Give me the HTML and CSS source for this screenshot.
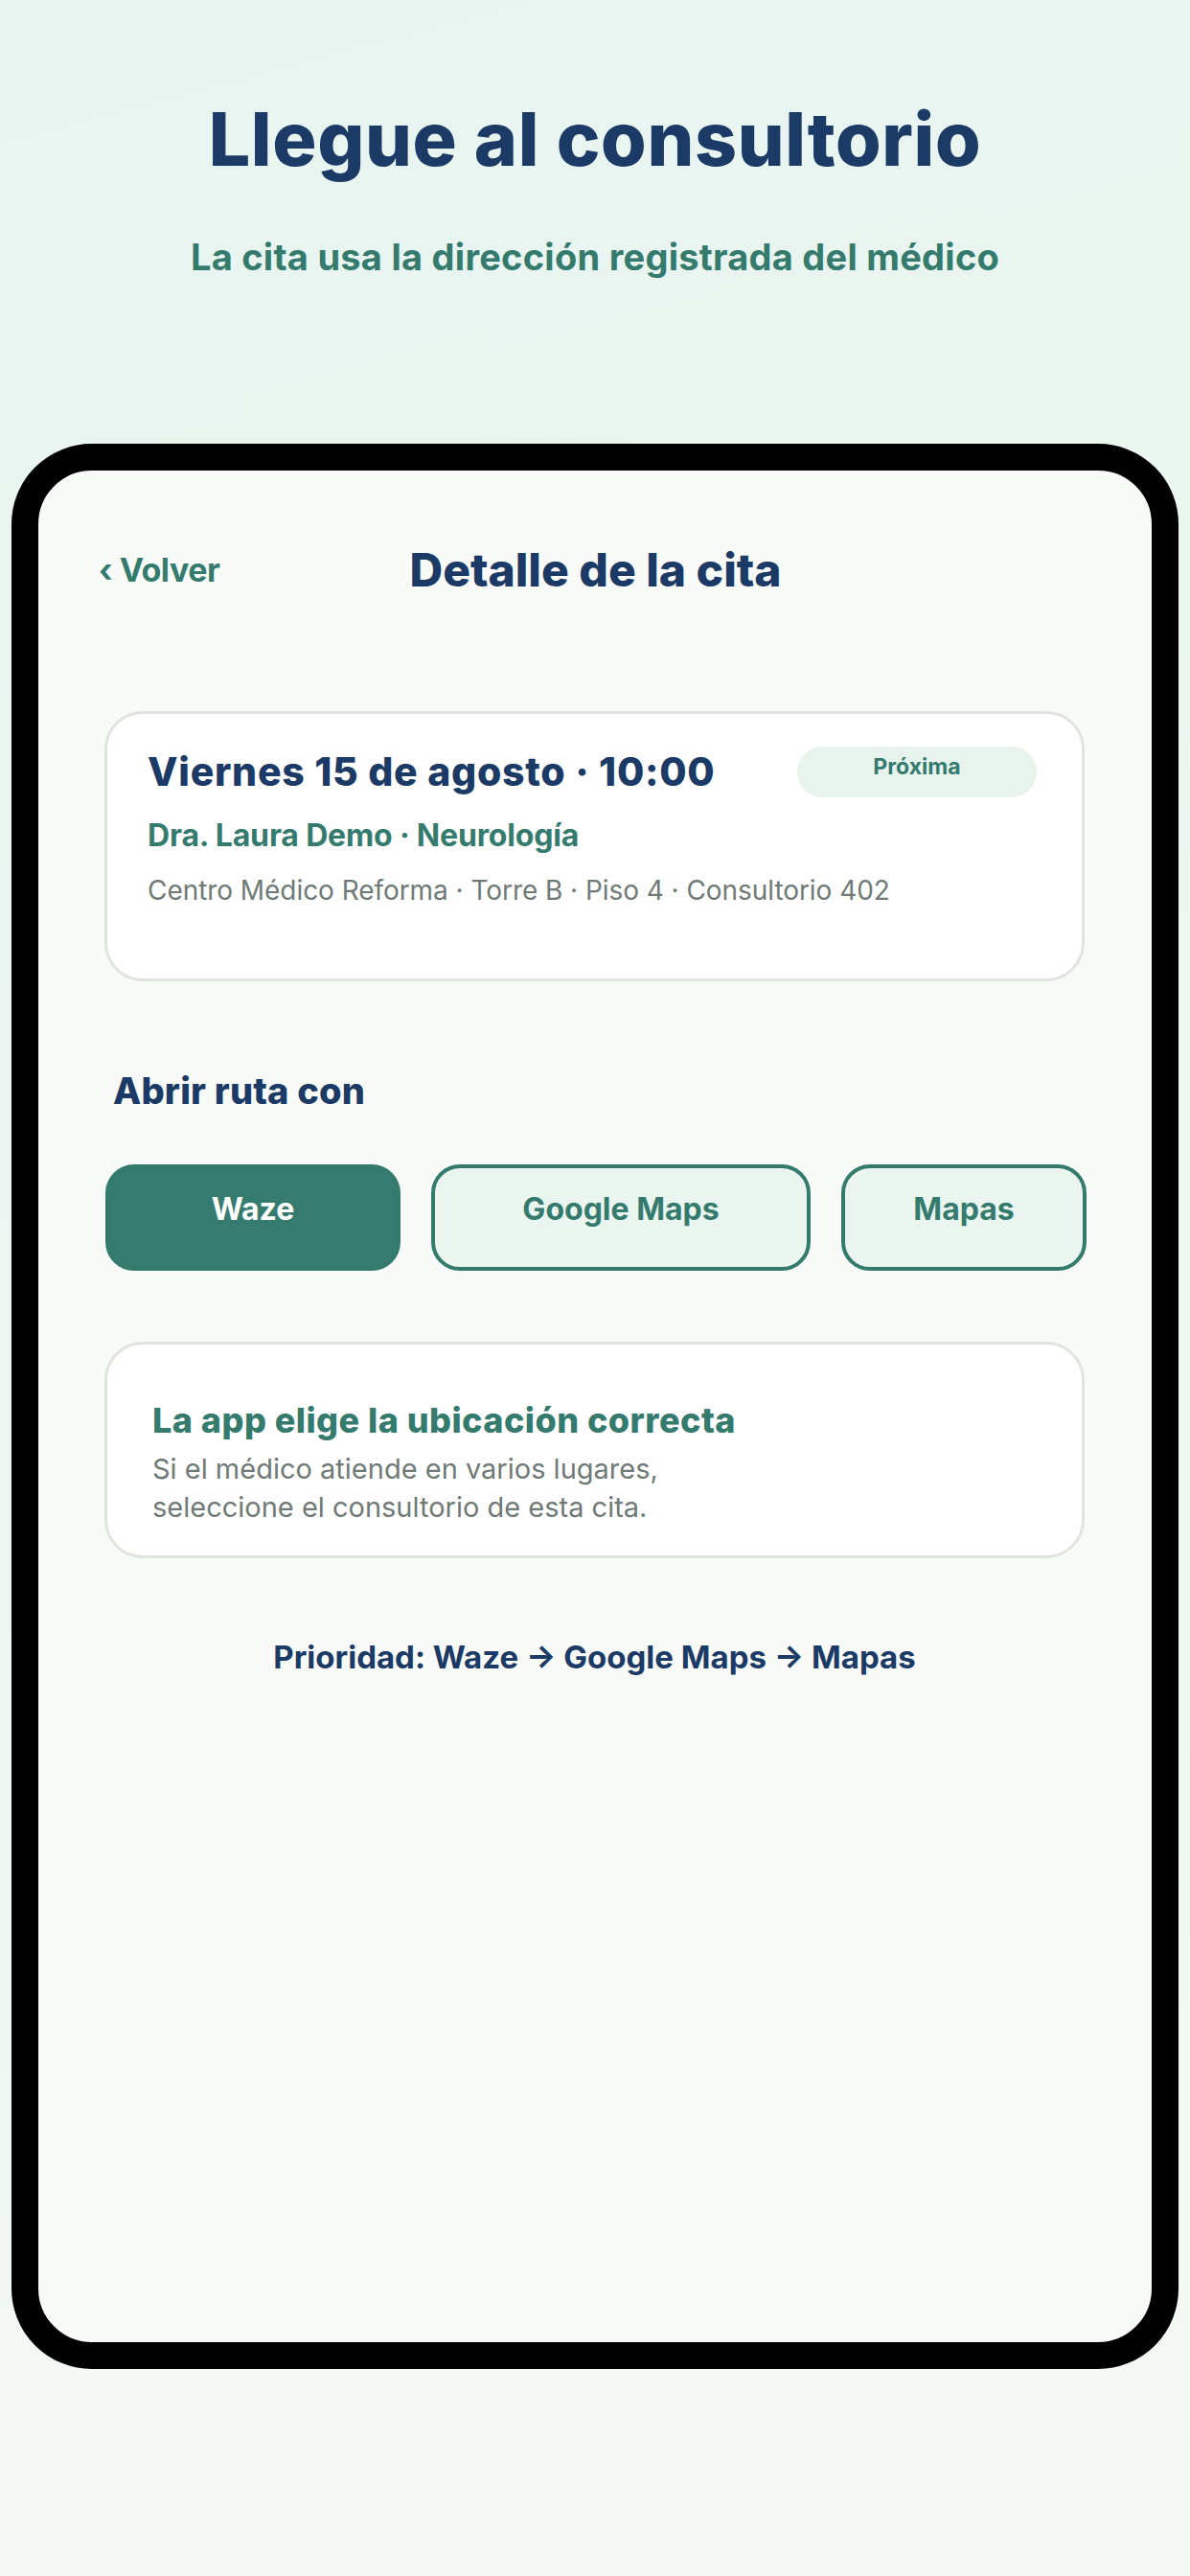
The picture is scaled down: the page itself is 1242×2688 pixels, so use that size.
FILE: index.html
```html
<!DOCTYPE html>
<html lang="es">
<head>
<meta charset="utf-8">
<title>Llegue al consultorio</title>
<link rel="stylesheet" href="styles.css">
</head>
<body>
<div class="page">
  <header class="hero">
    <h1 class="hero-title">Llegue al consultorio</h1>
    <p class="hero-sub">La cita usa la dirección registrada del médico</p>
  </header>
  <div class="phone">
    <div class="screen">
      <nav class="nav">
        <span class="back">‹ Volver</span>
        <span class="nav-title">Detalle de la cita</span>
        <span></span>
      </nav>
      <section class="card appt">
        <div class="appt-row">
          <span class="appt-date">Viernes 15 de agosto · 10:00</span>
          <span class="badge">Próxima</span>
        </div>
        <div class="appt-doctor">Dra. Laura Demo · Neurología</div>
        <div class="appt-place">Centro Médico Reforma · Torre B · Piso 4 · Consultorio 402</div>
      </section>
      <h2 class="section-title">Abrir ruta con</h2>
      <div class="routes">
        <button class="route route-primary">Waze</button>
        <button class="route">Google Maps</button>
        <button class="route">Mapas</button>
      </div>
      <section class="card info">
        <div class="info-title">La app elige la ubicación correcta</div>
        <p class="info-text">Si el médico atiende en varios lugares,<br>seleccione el consultorio de esta cita.</p>
      </section>
      <p class="priority">Prioridad: Waze → Google Maps → Mapas</p>
    </div>
  </div>
</div>
</body>
</html>
```
FILE: styles.css
```css
* { box-sizing: border-box; }
html, body { margin: 0; padding: 0; }
body {
  width: 1242px;
  height: 2688px;
  font-family: Inter, "Noto Sans", sans-serif;
  background: linear-gradient(165deg, #e7f4ef 0%, #eef6f2 50%, #f4f8f5 100%);
  overflow: hidden;
}
.page {
  display: flex;
  flex-direction: column;
  align-items: center;
}
.hero { text-align: center; padding-top: 107px; }
.hero-title {
  margin: 0;
  font-size: 77px;
  line-height: 1;
  font-weight: 800;
  letter-spacing: 0.008em;
  color: #1b3a66;
}
.hero-sub {
  margin: 65px 0 0;
  font-size: 38px;
  line-height: 1;
  font-weight: 700;
  letter-spacing: 0.007em;
  color: #347b6e;
}
.phone {
  margin-top: 176px;
  width: 1218px;
  height: 2009px;
  border: 28px solid #000;
  border-radius: 84px;
  background: #f8faf8;
  overflow: hidden;
}
.screen {
  padding: 80px 70px 0 69px;
  display: flex;
  flex-direction: column;
}
.nav {
  display: grid;
  grid-template-columns: 1fr auto 1fr;
  align-items: center;
  margin: 0 -8px 0 -6px;
}
.back {
  font-size: 34px;
  line-height: 1;
  font-weight: 700;
  color: #347b6e;
  letter-spacing: -0.015em;
}
.nav-title {
  font-size: 48px;
  line-height: 1;
  font-weight: 800;
  color: #1b3a66;
  letter-spacing: 0;
}
.card {
  background: #fff;
  border: 3px solid #e1e3e1;
  border-radius: 40px;
}
.appt {
  margin-top: 123px;
  padding: 34px 47px 78px 42px;
}
.appt-row {
  display: flex;
  align-items: center;
  justify-content: space-between;
}
.appt-date {
  font-size: 41px;
  line-height: 1;
  font-weight: 800;
  color: #1b3a66;
  letter-spacing: 0.018em;
}
.badge {
  width: 250px;
  height: 53px;
  padding-top: 10px;
  border-radius: 27px;
  background: #e8f3ee;
  color: #347b6e;
  font-size: 23px;
  line-height: 1;
  font-weight: 700;
  text-align: center;
}
.appt-doctor {
  margin-top: 24px;
  font-size: 32px;
  line-height: 1;
  font-weight: 700;
  color: #347b6e;
  letter-spacing: -0.005em;
}
.appt-place {
  margin-top: 27px;
  font-size: 28px;
  line-height: 1;
  font-weight: 400;
  color: #6f7a76;
  letter-spacing: -0.002em;
}
.section-title {
  margin: 95px 0 0 9px;
  font-size: 38px;
  line-height: 1;
  font-weight: 800;
  color: #1b3a66;
  letter-spacing: 0.005em;
}
.routes {
  margin-top: 58px;
  display: grid;
  grid-template-columns: 308fr 396fr 256fr;
  gap: 32px;
  margin-right: -2px;
  margin-left: 1px;
}
.route {
  height: 111px;
  border: 4px solid #347b6e;
  border-radius: 30px;
  background: #ebf5f0;
  color: #347b6e;
  font-family: Inter, "Noto Sans", sans-serif;
  font-size: 32px;
  line-height: 1;
  font-weight: 700;
  letter-spacing: 0;
  padding: 27px 0 0;
  display: flex;
  justify-content: center;
  align-items: flex-start;
}
.route-primary {
  background: #357b6f;
  color: #fff;
}
.info {
  margin-top: 74px;
  padding: 61px 40px 30px 47px;
}
.info-title {
  font-size: 36px;
  line-height: 1;
  font-weight: 800;
  color: #347b6e;
  letter-spacing: 0.013em;
}
.info-text {
  margin: 13px 0 0;
  font-size: 29px;
  line-height: 40px;
  color: #6f7a76;
  letter-spacing: 0;
}
.priority {
  margin: 87px 0 0;
  text-align: center;
  font-size: 33px;
  line-height: 1;
  font-weight: 700;
  color: #1b3a66;
  letter-spacing: 0;
}
```
